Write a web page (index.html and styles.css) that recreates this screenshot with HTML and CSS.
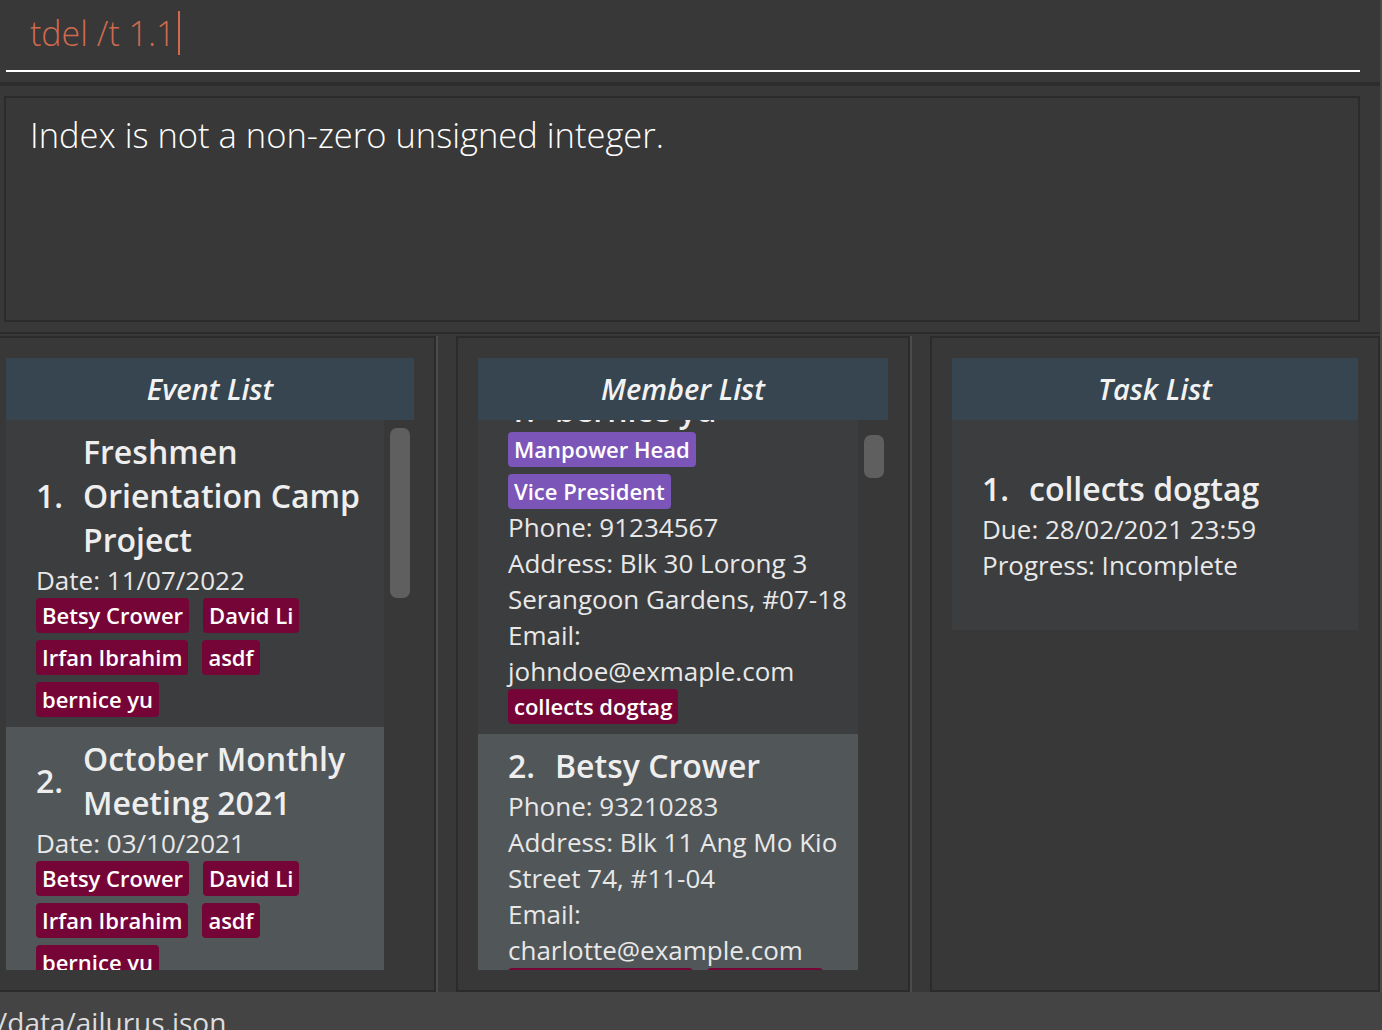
FILE: index.html
```html
<!DOCTYPE html>
<html lang="en">
<head>
<meta charset="utf-8">
<title>Ailurus</title>
<link rel="stylesheet" href="styles.css">
</head>
<body>
<div class="app">
  <div class="main">
    <div class="command">
      <div class="cmd-field">
        <span class="cmd-text">tdel /t 1.1</span><span class="caret"></span>
      </div>
    </div>
    <div class="sep"></div>
    <div class="result-wrap">
      <div class="result">Index is not a non-zero unsigned integer.</div>
    </div>
    <div class="sep-line"></div>
    <div class="panels">
      <section class="panel panel-event">
        <div class="panel-head">Event List</div>
        <div class="list">
          <div class="cards">
            <div class="card odd">
              <div class="title-row">
                <span class="num">1.</span>
                <span class="title">Freshmen Orientation Camp Project</span>
              </div>
              <div class="detail">Date: 11/07/2022</div>
              <div class="tags">
                <span class="tag">Betsy Crower</span>
                <span class="tag">David Li</span>
                <span class="tag">Irfan Ibrahim</span>
                <span class="tag">asdf</span>
                <span class="tag">bernice yu</span>
              </div>
            </div>
            <div class="card even">
              <div class="title-row">
                <span class="num">2.</span>
                <span class="title">October Monthly Meeting 2021</span>
              </div>
              <div class="detail">Date: 03/10/2021</div>
              <div class="tags">
                <span class="tag">Betsy Crower</span>
                <span class="tag">David Li</span>
                <span class="tag">Irfan Ibrahim</span>
                <span class="tag">asdf</span>
                <span class="tag">bernice yu</span>
              </div>
            </div>
          </div>
          <div class="track"><div class="thumb thumb-event"></div></div>
        </div>
      </section>
      <div class="divider"></div>
      <section class="panel panel-member">
        <div class="panel-head">Member List</div>
        <div class="list">
          <div class="cards">
            <div class="card odd member-card scrolled">
              <div class="title-row">
                <span class="num">1.</span>
                <span class="title">bernice yu</span>
              </div>
              <div class="tags tags-role">
                <span class="tag role">Manpower Head</span>
                <span class="tag role">Vice President</span>
              </div>
              <div class="detail">Phone: 91234567</div>
              <div class="detail">Address: Blk 30 Lorong 3 Serangoon Gardens, #07-18</div>
              <div class="detail">Email: johndoe@exmaple.com</div>
              <div class="tags">
                <span class="tag">collects dogtag</span>
              </div>
            </div>
            <div class="card even member-card">
              <div class="title-row">
                <span class="num">2.</span>
                <span class="title">Betsy Crower</span>
              </div>
              <div class="detail">Phone: 93210283</div>
              <div class="detail">Address: Blk 11 Ang Mo Kio Street 74, #11-04</div>
              <div class="detail">Email: charlotte@example.com</div>
              <div class="tags">
                <span class="tag">Freshmen Camp</span>
                <span class="tag">Treasurer</span>
              </div>
            </div>
          </div>
          <div class="track"><div class="thumb thumb-member"></div></div>
        </div>
      </section>
      <div class="divider"></div>
      <section class="panel panel-task">
        <div class="panel-head">Task List</div>
        <div class="list">
          <div class="cards">
            <div class="card odd task-card">
              <div class="title-row">
                <span class="num">1.</span>
                <span class="title">collects dogtag</span>
              </div>
              <div class="detail">Due: 28/02/2021 23:59</div>
              <div class="detail">Progress: Incomplete</div>
            </div>
          </div>
        </div>
      </section>
    </div>
  </div>
  <div class="status">/data/ailurus.json</div>
</div>
</body>
</html>
```
FILE: styles.css
```css
* { box-sizing: border-box; }
html, body { margin: 0; padding: 0; }
body {
  background: #383838;
  font-family: "Open Sans", "Noto Sans", sans-serif;
  color: #eaeaea;
  width: 1382px;
  height: 1030px;
  overflow: hidden;
}
.app { display: flex; flex-direction: column; height: 1030px; }
.main {
  display: flex;
  flex-direction: column;
  border-right: 2px solid #4a4a4a;
  height: 992px;
}
.command { height: 82px; padding: 0 20px 0 6px; }
.cmd-field {
  height: 72px;
  border-bottom: 2px solid #ffffff;
  padding-left: 24px;
  padding-bottom: 4px;
  display: flex;
  align-items: center;
}
.cmd-text {
  font-size: 34px;
  font-weight: 300;
  color: #cf6a4f;
  line-height: 46px;
}
.caret {
  display: inline-block;
  width: 2px;
  height: 44px;
  background: #cf6a4f;
  margin-left: 2px;
}
.sep { height: 4px; background: #2d2d2d; }
.result-wrap { padding: 10px 20px 10px 4px; }
.result {
  height: 226px;
  border: 2px solid #2b2b2b;
  padding: 12px 24px;
  font-size: 34.5px;
  font-weight: 300;
  line-height: 50px;
  color: #ffffff;
}
.sep-line {
  height: 2px;
  background: #2b2b2b;
  margin-bottom: 2px;
}
.panels { display: flex; height: 656px; }
.divider { width: 2px; background: #4b4b4b; margin-right: 18px; }
.panel {
  display: flex;
  flex-direction: column;
  border: 2px solid #2b2b2b;
  padding: 20px;
}
.panel-event { width: 436px; border-left: none; padding-left: 6px; }
.panel-member { width: 454px; }
.panel-task { width: 450px; }
.panel-head {
  height: 62px;
  flex: none;
  background: #36454f;
  color: #f2f2f2;
  font-size: 29px;
  font-weight: 600;
  font-style: italic;
  line-height: 62px;
  text-align: center;
}
.list { display: flex; height: 550px; overflow: hidden; }
.cards { flex: 1; overflow: hidden; min-width: 0; }
.track { width: 30px; flex: none; padding: 8px 4px 0 6px; }
.thumb { width: 20px; background: #5f5f5f; border-radius: 7px; }
.thumb-event { height: 170px; }
.thumb-member { height: 43px; margin-top: 7px; }
.card { padding: 10px 20px 10px 30px; }
.card.member-card { padding-right: 4px; }
.card.odd { background: #3c3d3f; }
.card.even { background: #515659; }
.scrolled { margin-top: -42px; }
.title-row { display: flex; align-items: center; }
.num {
  width: 47px;
  flex: none;
  font-size: 32px;
  font-weight: 600;
  line-height: 44px;
  color: #eeeeee;
}
.title {
  font-size: 32px;
  font-weight: 600;
  line-height: 44px;
  color: #eeeeee;
}
.detail { font-size: 26px; line-height: 36px; color: #e8e8e8; }
.tags { display: flex; flex-wrap: wrap; gap: 7px 14px; }
.tag {
  height: 35px;
  padding: 0 6px;
  border-radius: 4px;
  background: #760537;
  color: #ffffff;
  font-size: 22px;
  font-weight: 600;
  line-height: 35px;
  white-space: nowrap;
}
.tag.role { background: #7b55b8; }
.task-card {
  min-height: 210px;
  display: flex;
  flex-direction: column;
  justify-content: center;
  padding-left: 30px;
}
.status {
  height: 38px;
  background: #444444;
  color: #dddddd;
  font-size: 28px;
  line-height: 38px;
  padding-top: 11px;
  text-indent: -3px;
  overflow: hidden;
  white-space: nowrap;
}
```
